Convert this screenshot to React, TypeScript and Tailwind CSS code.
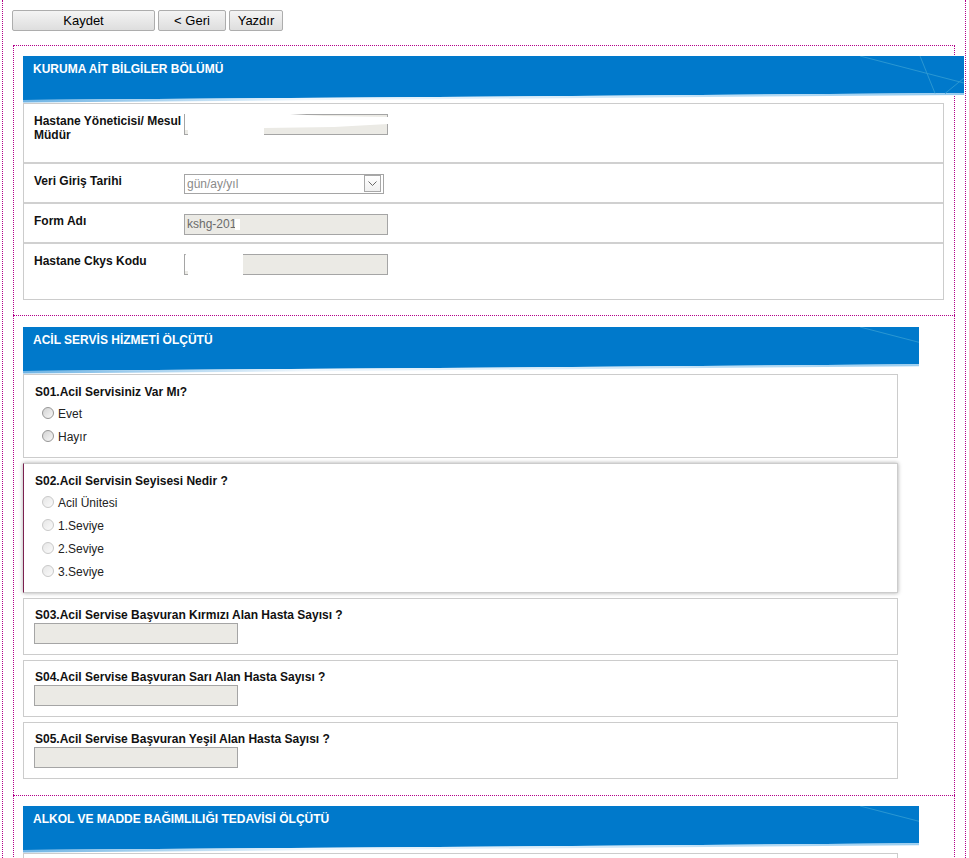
import React from "react";

function HeaderBg({ id }: { id: string }) {
  return (
    <svg width="941" height="47" viewBox="0 0 941 47" className="absolute left-0 top-0">
      <defs>
        <linearGradient id={id} x1="0" y1="0" x2="1" y2="0">
          <stop offset="0" stopColor="#6fb4e4" />
          <stop offset="0.3" stopColor="#eef6fc" />
          <stop offset="0.6" stopColor="#d6eaf8" />
          <stop offset="1" stopColor="#92c9ee" />
        </linearGradient>
      </defs>
      <polygon points="0,0 941,0 941,37 0,44" fill="#0079cb" />
      <polygon points="0,44 941,37 941,39 0,46.5" fill={`url(#${id})`} />
      <g stroke="#2a97d2" strokeWidth="1" fill="none">
        <line x1="837" y1="0" x2="941" y2="27" />
        <line x1="897" y1="0" x2="912" y2="37.3" />
        <line x1="941" y1="22" x2="922" y2="37.5" />
      </g>
    </svg>
  );
}

function Header({ title, id, wide }: { title: string; id: string; wide?: boolean }) {
  return (
    <div className={wide ? "relative h-[47px] w-[941px]" : "relative h-[47px] w-[896px] overflow-hidden"}>
      <HeaderBg id={id} />
      <div className="relative pl-[10px] pt-[5px] text-[12px] font-bold leading-[16px] text-white">{title}</div>
    </div>
  );
}

function Radio({ label, disabled }: { label: string; disabled?: boolean }) {
  return (
    <div className="flex h-[23px] items-center gap-[4px]">
      <span
        className={
          disabled
            ? "-mt-[2px] block h-[12px] w-[12px] rounded-full border border-[#c9c9c9] bg-gradient-to-br from-[#e6e6e6] to-[#fbfbfb]"
            : "-mt-[2px] block h-[12px] w-[12px] rounded-full border border-[#969696] bg-gradient-to-br from-[#d2d2d2] to-[#f8f8f8]"
        }
      />
      <span className="text-[12px] leading-[16px] text-[#222]">{label}</span>
    </div>
  );
}

function Input({ children }: { children?: React.ReactNode }) {
  return (
    <div className="relative h-[21px] w-[204px] border border-[#a5a5a5] bg-[#ebeae5] pl-[2px] text-[12px] leading-[19px] text-[#6a6a6a]">
      {children}
    </div>
  );
}

function NumberQuestion({ title }: { title: string }) {
  return (
    <div className="h-[57px] w-[875px] border border-[#cccccc] pl-[11px] pt-[9px]">
      <div className="text-[12px] font-bold leading-[15px] text-[#111]">{title}</div>
      <div className="-ml-[1px]">
        <Input />
      </div>
    </div>
  );
}

export default function App() {
  return (
    <div className="h-[858px] w-[969px] overflow-hidden bg-white font-['Liberation_Sans',Arial,sans-serif] text-black">
      <div className="ml-[2px] h-[900px] w-[964px] border-x border-dotted border-[#b3008a] pt-[10px]">
        {/* Buttons */}
        <div className="flex gap-[3px] pl-[9px]">
          <button className="h-[21px] w-[143px] rounded-[2px] border border-[#adadad] bg-gradient-to-b from-[#f4f4f4] to-[#dedede] text-[13px] leading-[19px] text-black">
            Kaydet
          </button>
          <button className="h-[21px] w-[68px] rounded-[2px] border border-[#adadad] bg-gradient-to-b from-[#f4f4f4] to-[#dedede] text-[13px] leading-[19px] text-black">
            &lt; Geri
          </button>
          <button className="h-[21px] w-[54px] rounded-[2px] border border-[#adadad] bg-gradient-to-b from-[#f4f4f4] to-[#dedede] text-[13px] leading-[19px] text-black">
            Yazdır
          </button>
        </div>

        {/* Section 1 */}
        <div className="ml-[10px] mt-[14px] w-[942px] border-x border-t border-dotted border-[#b3008a] pb-[15px] pl-[9px] pt-[10px]">
          <Header title="KURUMA AİT BİLGİLER BÖLÜMÜ" id="g1" wide />
          <div className="w-[921px] border border-[#cccccc] text-[12px]">
            <div className="flex h-[58px] pl-[10px] pt-[10px]">
              <div className="w-[150px] font-bold leading-[14px] text-[#111]">
                Hastane Yöneticisi/ Mesul Müdür
              </div>
              <div className="relative h-[21px] w-[204px] border border-[#a5a5a5] bg-[#ebeae5]">
                <svg width="204" height="21" viewBox="0 0 204 21" className="absolute -left-px -top-px">
                  <polygon points="4,0 106,0 140,2 204,3 204,10 150,13 80,14 80,21 4,21 4,16 1,16 1,0" fill="#ffffff" />
                  <rect x="48" y="19" width="32" height="2" fill="#ffffff" />
                </svg>
              </div>
            </div>
            <div className="flex h-[40px] border-t-2 border-[#d0d0d0] pl-[10px] pt-[10px]">
              <div className="w-[150px] font-bold leading-[14px] text-[#111]">Veri Giriş Tarihi</div>
              <div className="relative flex h-[20px] w-[200px] items-center border border-[#a5a5a5] bg-white pl-[2px] text-[12px] text-[#8a8a8a]">
                gün/ay/yıl
                <div className="absolute right-[2px] top-[0px] flex h-[17px] w-[17px] items-center justify-center border border-[#a8a8a8] bg-gradient-to-b from-[#ffffff] to-[#f0f0f0]">
                  <svg width="9" height="5" viewBox="0 0 9 5">
                    <polyline points="0.5,0.5 4.5,4.5 8.5,0.5" fill="none" stroke="#6a6a6a" strokeWidth="1" />
                  </svg>
                </div>
              </div>
            </div>
            <div className="flex h-[40px] border-t-2 border-[#d0d0d0] pl-[10px] pt-[10px]">
              <div className="w-[150px] font-bold leading-[14px] text-[#111]">Form Adı</div>
              <Input>
                kshg-201
                <span className="absolute left-[50px] top-[4px] h-[11px] w-[5px] bg-white" />
              </Input>
            </div>
            <div className="flex h-[57px] border-t-2 border-[#d0d0d0] pl-[10px] pt-[10px]">
              <div className="w-[150px] font-bold leading-[14px] text-[#111]">Hastane Ckys Kodu</div>
              <div className="relative h-[21px] w-[204px] border border-[#a5a5a5] bg-[#ebeae5]">
                <svg width="62" height="21" viewBox="0 0 62 21" className="absolute -left-px -top-px">
                  <polygon points="2,0 59,0 59,21 4,21 4,17 1,17 1,2" fill="#ffffff" />
                </svg>
              </div>
            </div>
          </div>
        </div>

        {/* Section 2 */}
        <div className="ml-[10px] w-[942px] border-x border-t border-dotted border-[#b3008a] pb-[16px] pl-[9px] pt-[11px]">
          <Header title="ACİL SERVİS HİZMETİ ÖLÇÜTÜ" id="g2" />
          <div className="flex flex-col gap-[5px]">
            <div className="h-[84px] w-[875px] border border-[#cccccc] pl-[11px] pt-[9px]">
              <div className="text-[12px] font-bold leading-[16px] text-[#111]">S01.Acil Servisiniz Var Mı?</div>
              <div className="mt-[2px] pl-[7px]">
                <Radio label="Evet" />
                <Radio label="Hayır" />
              </div>
            </div>
            <div className="h-[130px] w-[875px] border border-[#cccccc] border-l-[#7b2150] pl-[11px] pt-[9px] shadow-[0_0_4px_rgba(0,0,0,0.35)]">
              <div className="text-[12px] font-bold leading-[16px] text-[#111]">S02.Acil Servisin Seyisesi Nedir ?</div>
              <div className="mt-[2px] pl-[7px]">
                <Radio label="Acil Ünitesi" disabled />
                <Radio label="1.Seviye" disabled />
                <Radio label="2.Seviye" disabled />
                <Radio label="3.Seviye" disabled />
              </div>
            </div>
            <NumberQuestion title="S03.Acil Servise Başvuran Kırmızı Alan Hasta Sayısı ?" />
            <NumberQuestion title="S04.Acil Servise Başvuran Sarı Alan Hasta Sayısı ?" />
            <NumberQuestion title="S05.Acil Servise Başvuran Yeşil Alan Hasta Sayısı ?" />
          </div>
        </div>

        {/* Section 3 */}
        <div className="ml-[10px] w-[942px] border-x border-t border-dotted border-[#b3008a] pl-[9px] pt-[10px]">
          <Header title="ALKOL VE MADDE BAĞIMLILIĞI TEDAVİSİ ÖLÇÜTÜ" id="g3" />
          <div className="h-[60px] w-[875px] border border-[#cccccc]" />
        </div>
      </div>
    </div>
  );
}
